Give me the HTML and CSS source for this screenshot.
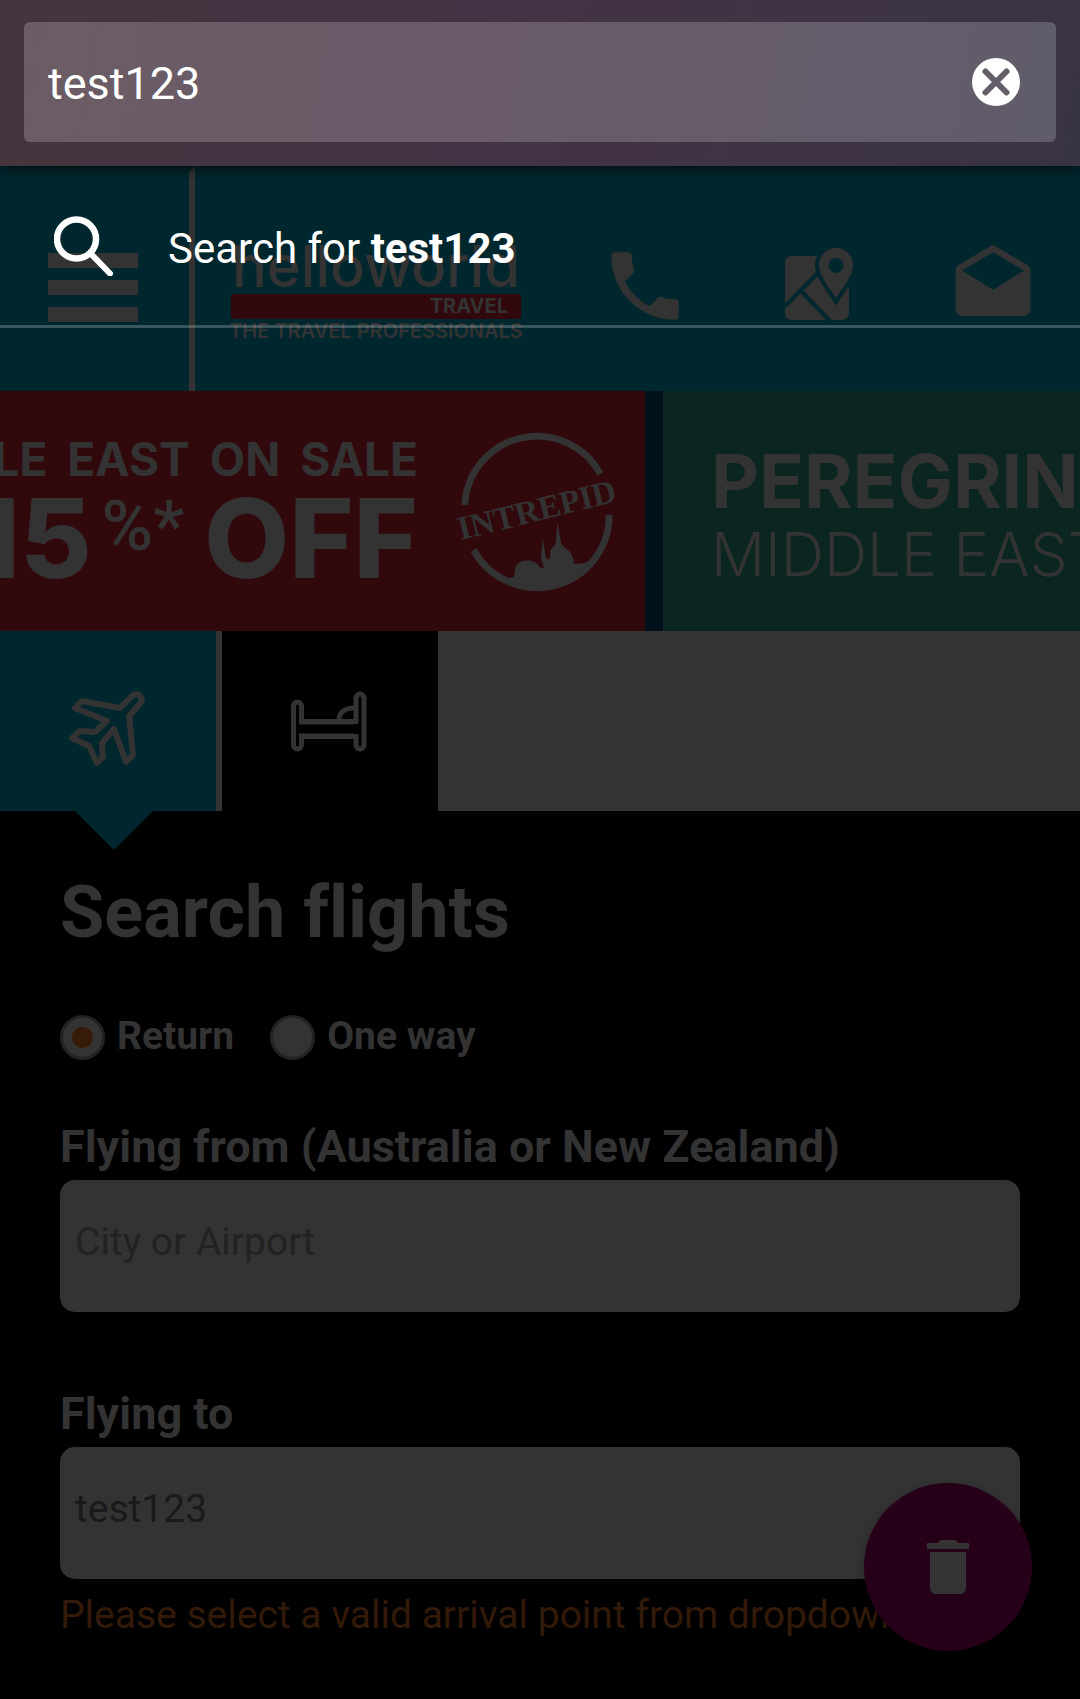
FILE: index.html
```html
<!DOCTYPE html>
<html lang="en">
<head>
<meta charset="utf-8">
<meta name="viewport" content="width=device-width, initial-scale=1">
<title>helloworld Travel</title>
<link rel="stylesheet" href="styles.css">
</head>
<body>
<div class="omnibox">
  <div class="omnibox-field">
    <input class="omnibox-input" type="text" aria-label="Search or enter address" value="test123">
    <button class="icon-button" type="button" aria-label="Clear">
      <svg width="48" height="48" viewBox="0 0 48 48"><circle cx="24" cy="24" r="24" fill="#fff"/><path d="M13.500 13.500l21 21M34.500 13.500l-21 21" stroke="#645d6a" stroke-width="6" stroke-linecap="round"/></svg>
    </button>
  </div>
  <a class="suggestion" href="#search">
    <svg width="60" height="60" viewBox="0 0 60 60" fill="none" stroke="#fff" stroke-linecap="round"><circle cx="22.500" cy="23" r="19.500" stroke-width="6.500"/><path d="M38 39l18 18.500" stroke-width="6"/></svg>
    <span>Search for <b>test123</b></span>
  </a>
</div>

<header class="site-header">
  <button class="menu-button" type="button" aria-label="Menu">
    <svg width="90" height="69" viewBox="0 0 90 69" fill="#333"><path d="M0 0h90v15H0zM0 27h90v15H0zM0 54h90v15H0z"/></svg>
  </button>
  <a class="logo" href="#home">
    <span class="logo-name">helloworld</span>
    <span class="logo-bar">TRAVEL</span>
    <span class="logo-tagline">THE TRAVEL PROFESSIONALS</span>
  </a>
  <nav class="header-links">
    <a href="#phone" aria-label="Call us"><svg width="90" height="90" viewBox="0 0 24 24" fill="#333"><path d="M6.620 10.790c1.440 2.830 3.760 5.140 6.590 6.590l2.200-2.200c.27-.27.67-.36 1.020-.24 1.120.37 2.330.57 3.570.57.55 0 1 .45 1 1V20c0 .55-.45 1-1 1-9.390 0-17-7.610-17-17 0-.55.45-1 1-1h3.500c.55 0 1 .45 1 1 0 1.250.2 2.450.57 3.570.11.35.03.74-.25 1.020z"/></svg></a>
    <a href="#stores" aria-label="Find a store"><svg width="90" height="90" viewBox="0 0 90 90"><rect x="11" y="15" width="64" height="64" rx="7" fill="#333"/><path d="M10 66l36-36M27 50l30 31" stroke="#00272e" stroke-width="4" fill="none"/><path d="M62 57C55 46 45 35 45 24a17 17 0 0 1 34 0c0 11-10 22-17 33z" fill="#333" stroke="#00272e" stroke-width="8" paint-order="stroke"/><circle cx="62" cy="24.500" r="7.500" fill="#00272e"/></svg></a>
    <a href="#mail" aria-label="Email us"><svg width="90" height="90" viewBox="0 0 24 24" fill="#333"><path d="M21.990 8c0-.72-.37-1.350-.94-1.700L12 1 2.950 6.300C2.380 6.650 2 7.280 2 8v10c0 1.100.9 2 2 2h16c1.100 0 2-.9 2-2l-.01-10zM12 13L3.740 7.840 12 3l8.260 4.840L12 13z"/></svg></a>
  </nav>
</header>

<section class="banner" aria-label="Offers">
  <a class="slide slide-red" href="#intrepid">
    <span class="offer">
      <span class="offer-title"><span>MIDDLE</span><span>EAST</span><span>ON</span><span>SALE</span></span>
      <span class="offer-price"><span>15</span><span class="offer-percent">%*</span><span>OFF</span></span>
    </span>
    <svg class="intrepid" width="156" height="160" viewBox="-2 -4 160 164">
      <g fill="none" stroke="#333" stroke-width="7"><path d="M4 72A74 74 0 0 1 143 40"/><path d="M13 118A74 74 0 0 0 152 82"/></g>
      <path d="M50 149c12 9 46 9 63-2 12-7 22-15 27-24-7 7-16 10-24 9-1-7-3-12-9-16l-4-4-4-22-2 22-5 6-1 10-4-2-3-20-2 19 3 12-4-1c-4-9-20-10-25-1-1 4 0 7-2 11l-16 2z" fill="#333"/>
      <text x="78" y="88" transform="rotate(-14 78 78)" text-anchor="middle">INTREPID</text>
    </svg>
  </a>
  <a class="slide slide-green" href="#peregrine">
    <span class="brand">PEREGRINE</span>
    <span class="region">MIDDLE EAST</span>
  </a>
</section>

<nav class="tabs" aria-label="Search type">
  <button class="tab tab-active" type="button" aria-label="Flights">
    <svg width="80" height="80" viewBox="0 0 80 80" fill="none" stroke="#333" stroke-width="6" stroke-linejoin="round"><path d="M52 20L63 9c3-3 6-4 9-1s2 6-1 9L61 28l4 39-7 7-12-33-12 14 1 14-6 6-8-17-17-8 8-7 15 1 12-11L7 20l7-7z"/></svg>
  </button>
  <button class="tab" type="button" aria-label="Hotels">
    <svg width="80" height="80" viewBox="0 0 80 80" fill="none" stroke="#333" stroke-width="5"><path d="M11.500 33.500V18a4 4 0 0 0-8 0v39a4 4 0 0 0 8 0V48.500H66V57a4 4 0 0 0 8 0V10a4 4 0 0 0-8 0v23.500zM9 34h55M9 48h55M49 32c0-7 5-12 16-12"/></svg>
  </button>
</nav>

<main class="search" id="search">
  <h1>Search flights</h1>
  <form>
    <div class="trip-type">
      <label class="radio"><input type="radio" name="trip" checked><span>Return</span></label>
      <label class="radio"><input type="radio" name="trip"><span>One way</span></label>
    </div>
    <div class="field">
      <label for="from">Flying from (Australia or New Zealand)</label>
      <input id="from" type="text" placeholder="City or Airport">
    </div>
    <div class="field">
      <label for="to">Flying to</label>
      <input id="to" type="text" value="test123">
      <p class="error">Please select a valid arrival point from dropdown</p>
    </div>
  </form>
</main>
<button class="delete-button" type="button" aria-label="Delete">
  <svg width="72" height="72" viewBox="0 0 24 24" fill="#333"><path d="M6 19c0 1.100.9 2 2 2h8c1.100 0 2-.9 2-2V7H6v12zM19 4h-3.500l-1-1h-5l-1 1H5v2h14V4z"/></svg>
</button>
</body>
</html>
```

FILE: styles.css
```css
* { box-sizing: border-box; }

body {
  margin: 0;
  min-height: 100vh;
  background: #000;
  color: #333;
  font-family: Roboto, "Liberation Sans", sans-serif;
  font-variant-ligatures: none;
  overflow-x: hidden;
}

a { color: inherit; text-decoration: none; }
svg { display: block; flex: none; }

button {
  padding: 0;
  border: 0;
  background: none;
  font: inherit;
}

/* Address bar */
.omnibox {
  position: relative;
  z-index: 2;
  padding: 22px 24px 24px;
  background: linear-gradient(100deg, #46343e, #443344 45%, #393445);
  box-shadow: 0 2px 14px rgba(0, 0, 0, 0.75);
}

.omnibox-field {
  display: flex;
  align-items: center;
  height: 120px;
  padding: 0 36px 0 24px;
  border-radius: 6px;
  background: rgba(255, 255, 255, 0.2);
}

.omnibox-input {
  flex: 1;
  min-width: 0;
  padding: 4px 0 0;
  border: 0;
  outline: 0;
  background: none;
  color: #fff;
  font: 45px/60px Roboto, sans-serif;
}

.suggestion {
  position: absolute;
  top: 100%;
  left: 0;
  right: 0;
  display: flex;
  align-items: center;
  gap: 54px;
  height: 162px;
  padding: 0 54px;
  border-bottom: 3px solid rgba(255, 255, 255, 0.22);
  color: #fff;
  font-size: 42px;
  line-height: 48px;
}

.suggestion span { padding-top: 6px; }

/* Site header */
.site-header {
  display: flex;
  height: 225px;
  background: #00272e;
}

.menu-button {
  flex: none;
  display: flex;
  align-items: center;
  width: 195px;
  padding: 12px 0 0 48px;
  border-top: 6px solid #00272e;
  border-right: 6px solid #333;
}

.logo {
  display: flex;
  flex-direction: column;
  align-items: center;
  width: 290px;
  margin-left: 36px;
  padding-top: 72px;
  font-family: Inter, sans-serif;
}

.logo-name { font-size: 58px; font-weight: 500; line-height: 56px; }

.logo-bar {
  width: 100%;
  padding-right: 13px;
  border-radius: 2px;
  background: #31090d;
  font-size: 20px;
  font-weight: 700;
  line-height: 25px;
  text-align: right;
}

.logo-tagline {
  font-size: 20px;
  font-weight: 600;
  line-height: 24px;
  white-space: nowrap;
}

.header-links {
  display: flex;
  align-items: center;
  gap: 84px;
  margin-left: auto;
  padding: 15px 42px 0 0;
}

/* Offers */
.banner {
  display: flex;
  gap: 18px;
  height: 240px;
  overflow: hidden;
  background: #00111b;
  font-family: Inter, sans-serif;
}

.slide { display: flex; overflow: hidden; white-space: nowrap; }

.slide-red {
  flex: none;
  align-items: center;
  justify-content: flex-end;
  gap: 41px;
  width: 645px;
  padding-right: 30px;
  background: #31090d;
}

.offer {
  display: flex;
  flex-direction: column;
  align-items: flex-end;
  padding-top: 4px;
  font-weight: 700;
}

.offer-title {
  display: flex;
  gap: 20px;
  font-size: 46px;
  line-height: 50px;
}

.offer-price {
  display: flex;
  gap: 10px;
  font-size: 110px;
  font-weight: 800;
  line-height: 108px;
}

.offer-percent {
  margin-right: 10px;
  font-family: Roboto, sans-serif;
  font-size: 70px;
  font-weight: 500;
  line-height: 84px;
}

.intrepid { overflow: visible; }

.intrepid text {
  fill: #333;
  font: bold 34px "Liberation Serif", serif;
}

.slide-green {
  flex: 1;
  flex-direction: column;
  justify-content: center;
  padding: 10px 0 0 48px;
  background: #0b2521;
}

.brand { font-size: 74px; font-weight: 700; line-height: 76px; }
.region { font-size: 60px; font-weight: 300; line-height: 70px; }

/* Tabs */
.tabs {
  display: flex;
  gap: 6px;
  height: 180px;
  background: #333;
}

.tab {
  position: relative;
  display: flex;
  align-items: center;
  justify-content: center;
  width: 216px;
  padding-top: 14px;
  background: #000;
}

.tab-active { background: #00272e; }

.tab-active::after {
  content: "";
  position: absolute;
  top: 100%;
  left: 75px;
  border: solid transparent;
  border-width: 39px 39px 0;
  border-top-color: #00272e;
}

/* Flight search */
.search { padding: 60px 60px 48px; }

h1 { margin: 0; font-size: 72px; line-height: 84px; }

.trip-type {
  display: flex;
  gap: 36px;
  margin: 60px 0;
}

.radio {
  display: flex;
  align-items: center;
  gap: 12px;
  height: 45px;
  font-size: 39px;
  font-weight: 700;
  line-height: 42px;
}

.radio span { height: 45px; }

.radio input {
  appearance: none;
  width: 45px;
  height: 45px;
  margin: 0;
  border: 3px solid #222;
  border-radius: 50%;
  background: #333;
}

.radio input:checked {
  background: radial-gradient(circle, #361b08 10px, #333 11px);
}

.field { display: flex; flex-direction: column; margin-bottom: 75px; }

.field label {
  padding-bottom: 6px;
  font-size: 45px;
  font-weight: 700;
  line-height: 54px;
}

.field input {
  width: 100%;
  height: 132px;
  padding: 0 15px 9px;
  border: 0;
  border-radius: 15px;
  background: #333;
  color: #1a1a1a;
  font: 39px Roboto, sans-serif;
}

.field input::placeholder { color: #222; opacity: 1; }

.error {
  margin: 12px 0 0;
  color: #331a08;
  font-size: 39px;
  line-height: 48px;
}

.delete-button {
  position: fixed;
  right: 48px;
  bottom: 48px;
  display: flex;
  align-items: center;
  justify-content: center;
  width: 168px;
  height: 168px;
  border-radius: 50%;
  background: #260019;
  box-shadow: 0 3px 9px rgba(0, 0, 0, 0.3);
}
```
